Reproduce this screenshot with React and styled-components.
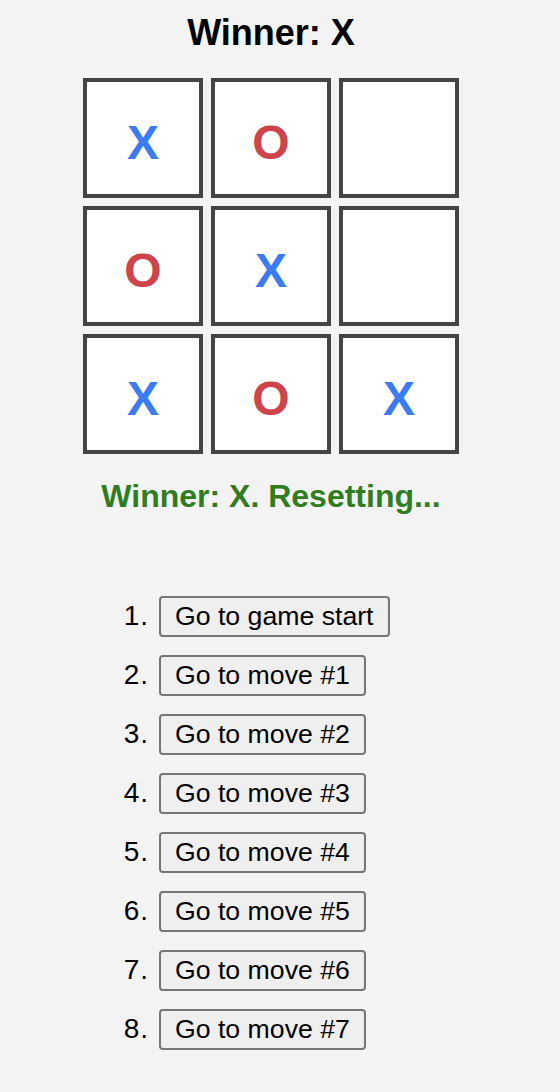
// Tic-tac-toe board after a finished game, with the move history list.
import styled, { createGlobalStyle } from "styled-components";

const GlobalStyle = createGlobalStyle`
  body {
    margin: 0;
    background-color: #f3f3f3;
    font-family: "Liberation Sans", Arial, sans-serif;
  }
`;

const Wrapper = styled.div`
  width: 542px;
  display: flex;
  flex-direction: column;
  align-items: center;
`;

const Title = styled.h1`
  margin: 12px 0 0;
  font-size: 36px;
  font-weight: bold;
  color: #000;
`;

const Board = styled.div`
  margin-top: 24px;
  display: grid;
  grid-template-columns: repeat(3, 120px);
  grid-auto-rows: 120px;
  gap: 8px;
`;

const Cell = styled.div`
  box-sizing: border-box;
  border: 4px solid #444;
  background-color: #fff;
  display: flex;
  justify-content: center;
  align-items: center;
  padding-top: 8px;
  font-size: 48px;
  font-weight: bold;
  color: ${(p) => (p.$mark === "X" ? "#3b7cf5" : "#cd444b")};
`;

const Status = styled.p`
  margin: 24px 0 0;
  font-size: 32px;
  font-weight: bold;
  color: #2f7d21;
`;

const History = styled.ol`
  align-self: flex-start;
  list-style: none;
  margin: 81px 0 40px 109px;
  padding: 0;
  display: flex;
  flex-direction: column;
  gap: 18px;
`;

const Row = styled.li`
  display: flex;
  align-items: baseline;
`;

const Number = styled.span`
  width: 40px;
  margin-right: 10px;
  text-align: right;
  font-size: 28px;
  letter-spacing: 1px;
  color: #000;
`;

const JumpButton = styled.button`
  box-sizing: border-box;
  height: 41px;
  padding: 0 14px;
  border: 2px solid #767676;
  border-radius: 4px;
  background-color: #efefef;
  font-family: "Liberation Sans", Arial, sans-serif;
  font-size: 26.67px;
  color: #000;
  cursor: pointer;
`;

const squares = ["X", "O", null, "O", "X", null, "X", "O", "X"];

const moves = [
  "Go to game start",
  "Go to move #1",
  "Go to move #2",
  "Go to move #3",
  "Go to move #4",
  "Go to move #5",
  "Go to move #6",
  "Go to move #7",
];

function App() {
  return (
    <>
      <GlobalStyle />
      <Wrapper>
        <Title>Winner: X</Title>
        <Board>
          {squares.map((s, i) => (
            <Cell key={i} $mark={s}>
              {s}
            </Cell>
          ))}
        </Board>
        <Status>Winner: X. Resetting...</Status>
        <History>
          {moves.map((label, i) => (
            <Row key={i}>
              <Number>{i + 1}.</Number>
              <JumpButton>{label}</JumpButton>
            </Row>
          ))}
        </History>
      </Wrapper>
    </>
  );
}

export default App;
